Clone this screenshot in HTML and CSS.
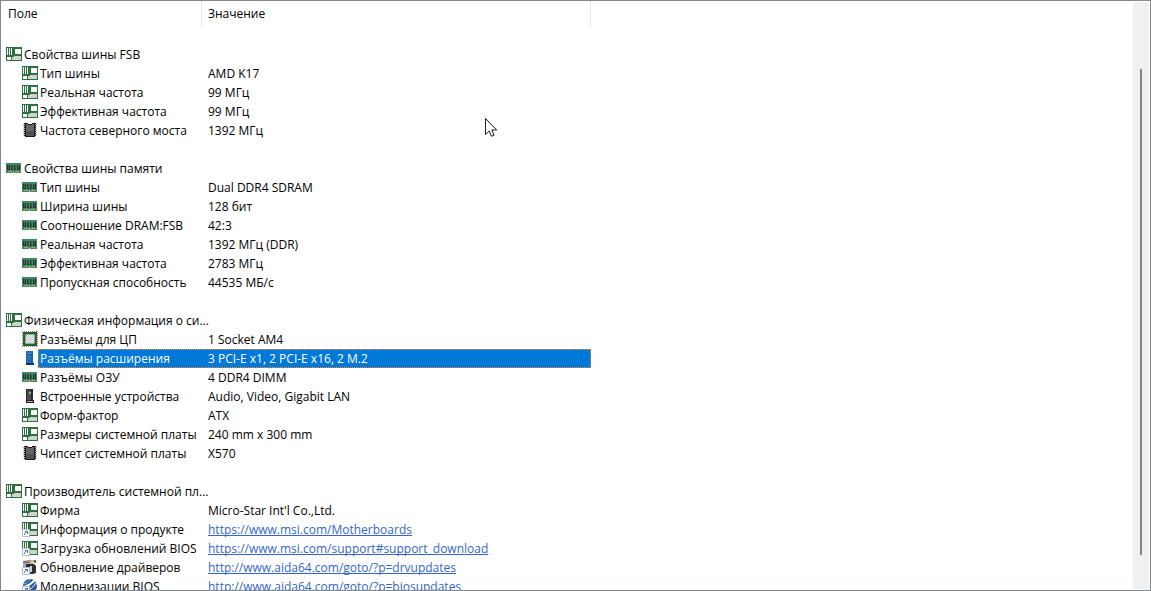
FILE: index.html
```
<!DOCTYPE html>
<html lang="ru">
<head>
    <meta charset="utf-8">
    <title>Системная плата</title>
    <link rel="stylesheet" href="styles.css">
</head>
<body>
    <svg class="sprite" aria-hidden="true">
        <symbol id="board" viewBox="0 0 16 16">
            <path fill="#2c7040" d="M0 1h16v14H0z"/>
            <path fill="#fff" d="M1 2h1v7H1zM3 2h1v7H3zM5 2h1v7H5zM9 3h6v5H9zM1 11h4v3H1z"/>
            <path fill="#d0d2d0" d="M6 11h2v-1h7v4H6z"/>
        </symbol>
        <symbol id="chip" viewBox="0 0 16 16">
            <path fill="#b4b4b4" d="M1 2h2v1H1zM1 4h2v1H1zM1 6h2v1H1zM1 8h2v1H1zM1 10h2v1H1zM1 12h2v1H1zM13 2h2v1h-2zM13 4h2v1h-2zM13 6h2v1h-2zM13 8h2v1h-2zM13 10h2v1h-2zM13 12h2v1h-2z"/>
            <path fill="#1c1c1e" d="M2 1h4v1h4V1h4v1h-1v1h1v1h-1v1h1v1h-1v1h1v1h-1v1h1v1h-1v1h1v1h-1v1h1v1h-1v1H3v-1H2v-1h1v-1H2v-1h1v-1H2V9h1V8H2V7h1V6H2V5h1V4H2V3h1V2H2z"/>
            <path fill="#66666a" d="M4 2h2v1h4V2h2v12H4z"/>
            <path fill="#505054" d="M4 9h8v5H4z"/>
        </symbol>
        <symbol id="ram" viewBox="0 0 16 16">
            <path fill="#3d8a68" d="M0 3h15v10H0z"/>
            <path fill="#24382f" d="M1 5h3v5H1zM5 5h2v5H5zM8 5h2v5H8zM11 5h3v5h-3z"/>
            <path fill="#46604f" d="M2 5h1v4H2zM6 5h1v4H6zM9 5h1v4H9zM12 5h1v4h-1z"/>
            <path fill="#d9963f" d="M2 11h4v1H2zM9 11h4v1H9z"/>
            <path fill="#fff" d="M7 12h1v1H7z"/>
        </symbol>
        <symbol id="cpu" viewBox="0 0 16 16">
            <path fill="#265c40" d="M1 1h14v14H1z"/>
            <path fill="none" stroke="#b08a48" stroke-dasharray="1 1" d="M0 .5h16M.5 0v16M0 15.5h16M15.5 0v16"/>
            <path fill="#8fae9c" d="M4 3h8l1 1v8l-1 1H4l-1-1V4z"/>
            <path fill="#d8dcd8" d="M5 4h7v8H4V5z"/>
        </symbol>
        <symbol id="slot" viewBox="0 0 16 16">
            <path fill="#1c62a0" d="M4 1h7v12H4z"/>
            <path fill="#2474b4" d="M5 1h4v12H5z"/>
            <path fill="#0b3868" d="M4 13h8v2H4zM7 4h2v1H7z"/>
            <path fill="#69b8ee" d="M7 3h2v1H7z"/>
        </symbol>
        <symbol id="device" viewBox="0 0 16 16">
            <path fill="#29292b" d="M4 1h7v12H4z"/>
            <path fill="#4b4b4e" d="M5 2h4v10H5z"/>
            <path fill="#3cef27" d="M7 4h2v2H7z"/>
            <path fill="#19191a" d="M4 12h8v3H4z"/>
            <path fill="#bbb" d="M5 13h6v1H5z"/>
        </symbol>
        <symbol id="shortcut" viewBox="0 0 16 16">
            <path fill="#fff" stroke="#b7bac0" d="M.5 8.5h7v7h-7z"/>
            <path fill="none" stroke="#3974b8" d="M3 10.5h2.5V13M5.500 10.500C3.500 11 2.500 12 2.500 14"/>
        </symbol>
        <symbol id="board-link" viewBox="0 0 16 16">
            <use href="#board"/>
            <use href="#shortcut"/>
        </symbol>
        <symbol id="driver" viewBox="0 0 16 16">
            <path fill="#777a7b" d="M1 2l8-1v3l-8 2z"/>
            <path fill="#e2a263" d="M7 2l5-1 1 2-6 1z"/>
            <path fill="#45804c" d="M12 1h2v3h-2z"/>
            <path fill="#a6a8aa" d="M1 4h10v9H1z"/>
            <path fill="#2e3032" d="M4 5h8l2 2v7l-3 1H8V8H4z"/>
            <path fill="#d3d3d3" d="M8 7h2v6H8z"/>
            <use href="#shortcut"/>
        </symbol>
        <symbol id="bios" viewBox="0 0 16 16">
            <circle cx="8" cy="8" r="7" fill="#285b9e"/>
            <path fill="none" stroke="#fff" stroke-width="2" d="M2 9C6 8 9 6 13 2"/>
            <path fill="none" stroke="#fff" d="M7 12c3-2 5-4 7-7"/>
            <path fill="none" stroke="#8fb4df" d="M2 6c3-1 5-3 6-5"/>
            <use href="#shortcut"/>
        </symbol>
    </svg>

    <div class="pane">
        <div class="list">
            <table>
                <colgroup>
                    <col class="col-field">
                    <col class="col-value">
                </colgroup>
                <thead>
                    <tr><th scope="col">Поле</th><th scope="col">Значение</th></tr>
                </thead>
                <tbody>
                    <tr class="blank"><td colspan="2"></td></tr>
                    <tr class="group"><td><div class="field"><svg><use href="#board"/></svg><span>Свойства шины FSB</span></div></td><td></td></tr>
                    <tr><td><div class="field"><svg><use href="#board"/></svg><span>Тип шины</span></div></td><td>AMD K17</td></tr>
                    <tr><td><div class="field"><svg><use href="#board"/></svg><span>Реальная частота</span></div></td><td>99 МГц</td></tr>
                    <tr><td><div class="field"><svg><use href="#board"/></svg><span>Эффективная частота</span></div></td><td>99 МГц</td></tr>
                    <tr><td><div class="field"><svg><use href="#chip"/></svg><span>Частота северного моста</span></div></td><td>1392 МГц</td></tr>

                    <tr class="blank"><td colspan="2"></td></tr>
                    <tr class="group"><td><div class="field"><svg><use href="#ram"/></svg><span>Свойства шины памяти</span></div></td><td></td></tr>
                    <tr><td><div class="field"><svg><use href="#ram"/></svg><span>Тип шины</span></div></td><td>Dual DDR4 SDRAM</td></tr>
                    <tr><td><div class="field"><svg><use href="#ram"/></svg><span>Ширина шины</span></div></td><td>128 бит</td></tr>
                    <tr><td><div class="field"><svg><use href="#ram"/></svg><span>Соотношение DRAM:FSB</span></div></td><td>42:3</td></tr>
                    <tr><td><div class="field"><svg><use href="#ram"/></svg><span>Реальная частота</span></div></td><td>1392 МГц (DDR)</td></tr>
                    <tr><td><div class="field"><svg><use href="#ram"/></svg><span>Эффективная частота</span></div></td><td>2783 МГц</td></tr>
                    <tr><td><div class="field"><svg><use href="#ram"/></svg><span>Пропускная способность</span></div></td><td>44535 МБ/с</td></tr>

                    <tr class="blank"><td colspan="2"></td></tr>
                    <tr class="group"><td><div class="field"><svg><use href="#board"/></svg><span>Физическая информация о си...</span></div></td><td></td></tr>
                    <tr><td><div class="field"><svg><use href="#cpu"/></svg><span>Разъёмы для ЦП</span></div></td><td>1 Socket AM4</td></tr>
                    <tr class="selected"><td><div class="field"><svg><use href="#slot"/></svg><span>Разъёмы расширения</span></div></td><td>3 PCI-E x1, 2 PCI-E x16, 2 M.2</td></tr>
                    <tr><td><div class="field"><svg><use href="#ram"/></svg><span>Разъёмы ОЗУ</span></div></td><td>4 DDR4 DIMM</td></tr>
                    <tr><td><div class="field"><svg><use href="#device"/></svg><span>Встроенные устройства</span></div></td><td>Audio, Video, Gigabit LAN</td></tr>
                    <tr><td><div class="field"><svg><use href="#board"/></svg><span>Форм-фактор</span></div></td><td>ATX</td></tr>
                    <tr><td><div class="field"><svg><use href="#board"/></svg><span>Размеры системной платы</span></div></td><td>240 mm x 300 mm</td></tr>
                    <tr><td><div class="field"><svg><use href="#chip"/></svg><span>Чипсет системной платы</span></div></td><td>X570</td></tr>

                    <tr class="blank"><td colspan="2"></td></tr>
                    <tr class="group"><td><div class="field"><svg><use href="#board"/></svg><span>Производитель системной пл...</span></div></td><td></td></tr>
                    <tr><td><div class="field"><svg><use href="#board"/></svg><span>Фирма</span></div></td><td>Micro-Star Int'l Co.,Ltd.</td></tr>
                    <tr><td><div class="field"><svg><use href="#board-link"/></svg><span>Информация о продукте</span></div></td><td><a href="https://www.msi.com/Motherboards">https://www.msi.com/Motherboards</a></td></tr>
                    <tr><td><div class="field"><svg><use href="#board-link"/></svg><span>Загрузка обновлений BIOS</span></div></td><td><a href="https://www.msi.com/support#support_download">https://www.msi.com/support#support_download</a></td></tr>
                    <tr><td><div class="field"><svg><use href="#driver"/></svg><span>Обновление драйверов</span></div></td><td><a href="http://www.aida64.com/goto/?p=drvupdates">http://www.aida64.com/goto/?p=drvupdates</a></td></tr>
                    <tr><td><div class="field"><svg><use href="#bios"/></svg><span>Модернизации BIOS</span></div></td><td><a href="http://www.aida64.com/goto/?p=biosupdates">http://www.aida64.com/goto/?p=biosupdates</a></td></tr>
                </tbody>
            </table>
        </div>
        <div class="scrollbar"><div class="thumb"></div></div>
    </div>

    <svg class="cursor" viewBox="0 0 12 19" aria-hidden="true">
        <path fill="#fff" stroke="#1a1a24" d="M.5.5v16l3.700-3.500 2.300 5.300 2.600-1.100-2.300-5.200h4.900z"/>
    </svg>
</body>
</html>
```
FILE: styles.css
```
* {
    box-sizing: border-box;
}

body {
    margin: 0;
    font-family: "Segoe UI", "Open Sans", "Noto Sans", sans-serif;
    font-size: 12px;
    line-height: 18px;
    color: #000;
    background: #fff;
}

.sprite {
    display: none;
}

.pane {
    display: flex;
    height: 100vh;
    border: 1px solid #828790;
    overflow: hidden;
}

.list {
    flex: 1;
    overflow: hidden;
}

table {
    width: 590px;
    table-layout: fixed;
    border-collapse: separate;
    border-spacing: 0;
}

.col-field {
    width: 201px;
}

th {
    height: 25px;
    padding: 0 6px;
    border-right: 1px solid #e5e5e5;
    font-weight: normal;
    text-align: left;
}

th:first-child {
    padding-left: 7px;
}

td {
    height: 19px;
    padding: 0 0 0 6px;
    white-space: nowrap;
}

td:first-child {
    padding-left: 21px;
}

.group td:first-child {
    padding-left: 5px;
}

.field {
    display: flex;
    height: 19px;
}

.field svg {
    flex: none;
    width: 16px;
    height: 16px;
    margin-top: 1px;
}

.field span {
    flex: 1;
    padding-left: 2px;
    line-height: 19px;
}

/* selected row: highlight starts after the icon */
.selected td + td,
.selected span {
    height: 19px;
    line-height: 17px;
    color: #fff;
    background: #0078d7;
    border: 1px dotted #ff8728;
}

.selected td + td {
    border-left: none;
}

.selected span {
    padding-left: 1px;
    border-right: none;
}

a {
    color: #3366cc;
    text-underline-offset: 1px;
    text-decoration-skip-ink: none;
}

.scrollbar {
    width: 16px;
    margin: 1px 1px 1px 0;
    padding: 67px 7px 34px;
    background: #f0f0f0;
}

.thumb {
    height: 100%;
    background: #868686;
}

.cursor {
    position: absolute;
    left: 485px;
    top: 118px;
    width: 12px;
    height: 19px;
}
```
